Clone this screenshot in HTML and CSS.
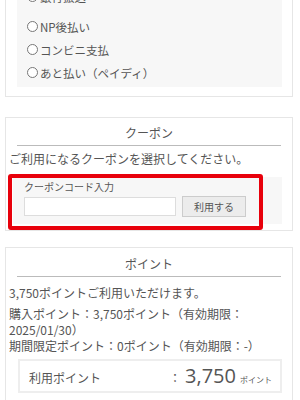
FILE: index.html
```html
<!DOCTYPE html>
<html lang="ja">
<head>
<meta charset="utf-8">
<link rel="stylesheet" href="styles.css">
</head>
<body>
<div class="page">
  <section class="card card-pay">
    <div class="panel">
      <label class="radio radio-cut"><span class="circle"></span>銀行振込</label>
      <label class="radio"><span class="circle"></span>NP後払い</label>
      <label class="radio"><span class="circle"></span>コンビニ支払</label>
      <label class="radio"><span class="circle"></span>あと払い（ペイディ）</label>
    </div>
  </section>
  <svg class="tear" width="300" height="16" viewBox="0 0 300 16">
    <path d="M0 3 H300 V11 Q292.5 14 285 11 T270 11 T255 11 T240 11 T225 11 T210 11 T195 11 T180 11 T165 11 T150 11 T135 11 T120 11 T105 11 T90 11 T75 11 T60 11 T45 11 T30 11 T15 11 T0 11 Z" fill="#fff"/>
    <path d="M0 3 Q7.5 1 15 3 T30 3 T45 3 T60 3 T75 3 T90 3 T105 3 T120 3 T135 3 T150 3 T165 3 T180 3 T195 3 T210 3 T225 3 T240 3 T255 3 T270 3 T285 3 T300 3" fill="none" stroke="#f0f0f0" stroke-width="1"/>
    <path d="M300 11 Q292.5 14 285 11 T270 11 T255 11 T240 11 T225 11 T210 11 T195 11 T180 11 T165 11 T150 11 T135 11 T120 11 T105 11 T90 11 T75 11 T60 11 T45 11 T30 11 T15 11 T0 11" fill="none" stroke="#e2e2e2" stroke-width="1"/>
  </svg>

  <section class="card card-coupon">
    <h2 class="card-title">クーポン</h2>
    <p class="lead">ご利用になるクーポンを選択してください。</p>
    <div class="panel coupon-panel">
      <div class="coupon-label">クーポンコード入力</div>
      <div class="coupon-row">
        <span class="input"></span>
        <span class="btn">利用する</span>
      </div>
    </div>
    <div class="highlight"></div>
  </section>

  <section class="card card-point">
    <h2 class="card-title">ポイント</h2>
    <p class="lead">3,750ポイントご利用いただけます。</p>
    <p class="detail">購入ポイント：3,750ポイント（有効期限：<br>2025/01/30）<br>期間限定ポイント：0ポイント（有効期限：-）</p>
    <div class="use-box">
      <span class="use-label">利用ポイント</span>
      <span class="use-colon">：</span>
      <span class="use-num">3,750</span>
      <span class="use-unit">ポイント</span>
    </div>
  </section>
</div>
</body>
</html>
```

FILE: styles.css
```css
* { box-sizing: border-box; }
html, body { margin: 0; padding: 0; background: #fff; }
body {
  font-family: "Noto Sans CJK JP", "Noto Sans", sans-serif;
  color: #555;
  font-size: 12px;
  line-height: 16px;
  width: 300px;
  height: 400px;
  overflow: hidden;
}
.page { position: relative; padding: 0 7px 0 5px; }
.card {
  position: relative;
  border: 1px solid #e6e6e6;
  background: #fff;
}
.card-pay {
  margin-top: -15px;
  border-top: none;
  padding: 0 10px 9px 11px;
  height: 112px;
}
.panel { background: #f7f7f7; }
.card-pay .panel { padding: 0 0 3px 10px; height: 102px; }
.radio {
  display: flex;
  align-items: center;
  height: 23px;
  font-size: 11.5px;
}
.radio-cut { margin-bottom: 7px; }
.circle {
  width: 11px;
  height: 11px;
  border: 1px solid #777;
  border-radius: 50%;
  margin-right: 2px;
  background: #fff;
}
.tear { position: absolute; left: 0; top: 1px; }

.card-coupon { margin-top: 20px; height: 114px; }
.card-title {
  margin: 0 11px;
  padding: 7px 0 4px;
  font-size: 12px;
  font-weight: normal;
  text-align: center;
  line-height: 16px;
  border-bottom: 1px solid #bbb;
}
.lead { margin: 0; padding: 5px 3px 0; }
.coupon-panel {
  margin: 10px 10px 0 7px;
  padding: 3px 0 6px 11px;
  height: 47px;
}
.coupon-label { font-size: 10px; line-height: 14px; }
.coupon-row { display: flex; align-items: center; margin-top: 2px; }
.input {
  width: 152px;
  height: 19px;
  background: #fff;
  border: 1px solid #ddd;
}
.btn {
  margin-left: 6px;
  width: 64px;
  height: 21px;
  background: #ececec;
  border: 1px solid #ccc;
  font-size: 10px;
  line-height: 19px;
  text-align: center;
}
.highlight {
  position: absolute;
  left: 2px;
  top: 56px;
  width: 255px;
  height: 56px;
  border: 4px solid #e8000b;
  border-radius: 3px;
}

.card-point { margin-top: 16px; height: 170px; }
.card-point .card-title { padding: 8px 0 4px; }
.card-point .lead { padding-top: 8px; }
.detail { margin: 5px 0 0; padding: 0 3px; }
.use-box {
  display: flex;
  align-items: baseline;
  margin: 5px 10px 0 12px;
  height: 34px;
  padding: 0 0 0 9px;
  border: 2px solid #eee;
  background: #fff;
}
.use-label { width: 140px; line-height: 30px; }
.use-colon { margin-right: 4px; }
.use-num { font-family: "Open Sans", "Noto Sans", sans-serif; font-size: 20px; line-height: 30px; font-weight: 400; }
.use-unit { font-size: 8px; margin-left: 4px; }
```
